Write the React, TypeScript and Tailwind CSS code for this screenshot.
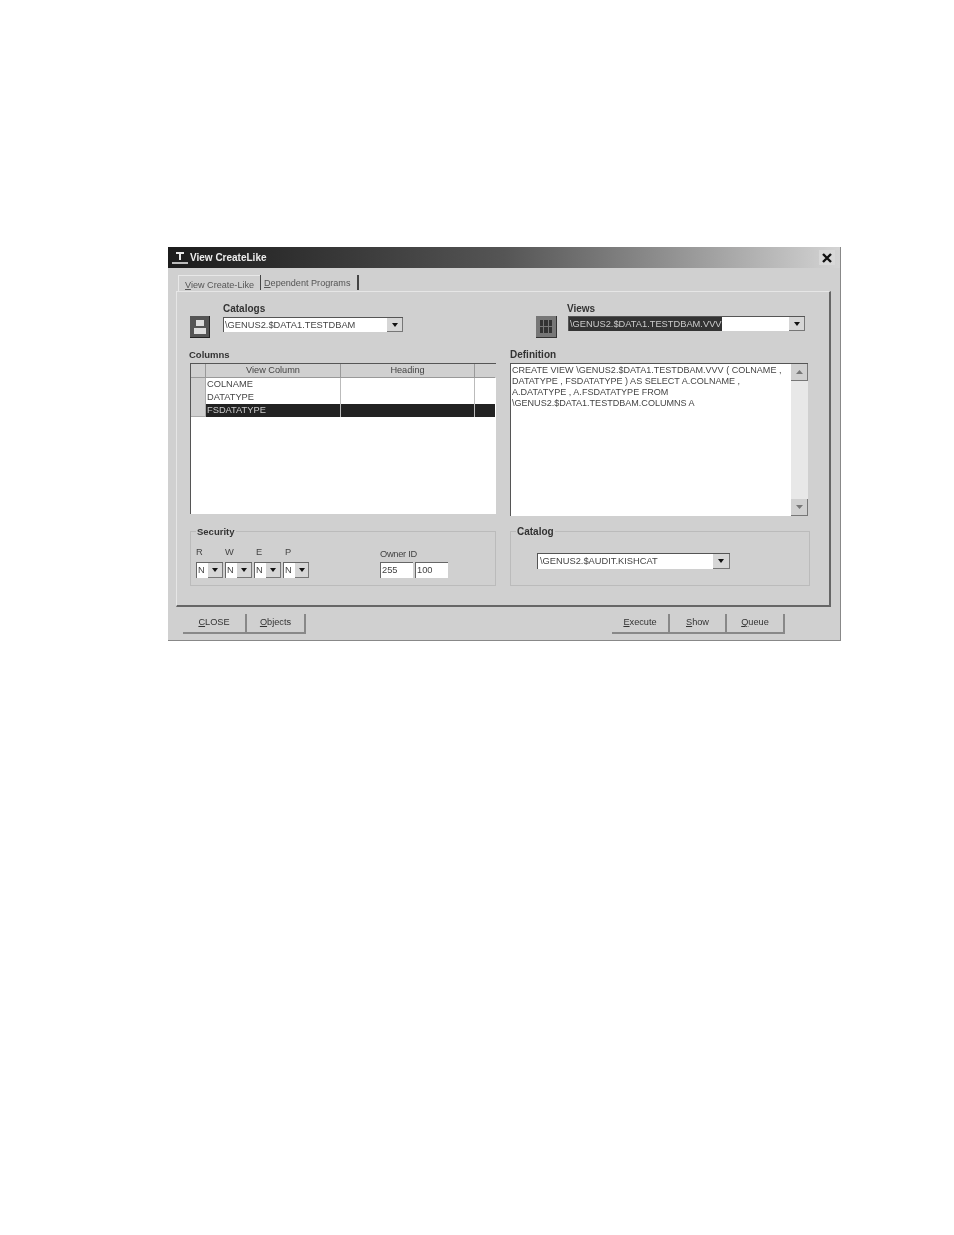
function Arrow() {
  return (
    <svg width="6" height="4" viewBox="0 0 6 4"><path d="M0 0h6L3 4z" fill="#111" /></svg>
  );
}
function DropBtn({ className }: { className: string }) {
  return (
    <div className={`flex items-center justify-center bg-[#d6d6d6] border-r border-b border-[#777] ${className}`}>
      <Arrow />
    </div>
  );
}
function MiniCombo({ w }: { w: string }) {
  return (
    <div className={`flex h-[16px] ${w} bg-white border-t border-l border-[#666]`}>
      <span className="w-[11px] pl-[1px] text-[9.3px] leading-[15px] text-[#444]">N</span>
      <DropBtn className="flex-1" />
    </div>
  );
}
function Btn({ label, u, w }: { label: string; u: string; w: string }) {
  const rest = label.slice(u.length);
  return (
    <div className={`h-[20px] ${w} flex items-center justify-center bg-[#d0d0d0] border-r-2 border-b-2 border-[#888] text-[9.2px] text-[#333]`}>
      <span><span className="underline">{u}</span>{rest}</span>
    </div>
  );
}
function Row({ text, dark }: { text: string; dark?: boolean }) {
  const cell = dark ? "bg-[#222] text-[#ccc]" : "bg-white text-[#444] border-b border-[#ccc]";
  return (
    <div className="grid grid-cols-[15px_135px_134px_20px] h-[13px] text-[9.3px] leading-[13px]">
      <div className="bg-[#d0d0d0] border-r border-b border-[#aaa]" />
      <div className={`${cell} pl-[1px] border-r border-r-[#bbb]`}>{text}</div>
      <div className={`${cell} border-r border-r-[#bbb]`} />
      <div className={cell} />
    </div>
  );
}
export default function App() {
  return (
    <div className="w-[954px] h-[1235px] bg-white pt-[247px] pl-[168px] font-['Liberation_Sans',Arial,sans-serif]">
      <div className="w-[673px] h-[394px] bg-[#d0d0d0] border-r border-b border-[#888] flex flex-col blur-[0.6px]">
        <div className="h-[21px] shrink-0 flex items-center bg-gradient-to-r from-[#1c1c1c] via-[#555] to-[#d4d4d4] pl-[3px] pr-[5px]">
          <svg width="18" height="17" viewBox="0 0 18 17" className="shrink-0">
            <path d="M5 3h8v2h-3v6H8V5H5z" fill="#e8e8e8" />
            <path d="M1 13h16v2H1z" fill="#bbb" />
          </svg>
          <span className="ml-[1px] text-[10px] font-bold text-[#eee]">View CreateLike</span>
          <div className="ml-auto w-[16px] h-[15px] bg-[#d8d8d8] flex items-center justify-center">
            <svg width="10" height="10" viewBox="0 0 10 10"><path d="M1 1l8 8M9 1L1 9" stroke="#111" strokeWidth="2.4" /></svg>
          </div>
        </div>
        <div className="h-[23px] shrink-0 flex items-end pl-[10px] text-[9.1px] text-[#555]">
          <div className="h-[16px] w-[82px] pl-[6px] leading-[18px] border-t border-l border-[#e8e8e8] whitespace-nowrap">
            <span className="underline">V</span>iew Create-Like
          </div>
          <div className="h-[15px] mb-[1px] w-[99px] pl-[3px] leading-[16px] border-l border-r-2 border-[#444] whitespace-nowrap">
            <span className="underline">D</span>ependent Programs
          </div>
        </div>
        <div className="ml-[8px] w-[655px] h-[316px] shrink-0 border-t border-l border-[#e6e6e6] border-r-2 border-b-2 border-r-[#666] border-b-[#666] pl-[12px] pt-[10px]">
          <div className="grid grid-cols-[321px_300px]">
            <div>
              <div className="pl-[34px] text-[10px] font-bold leading-[13px] text-[#333]">Catalogs</div>
              <div className="flex items-start mt-[2px]">
                <div className="ml-[1px] -mt-[1px] w-[20px] h-[22px] bg-[#555] border-r border-b border-[#222] flex flex-col items-center justify-center gap-[2px]">
                  <div className="w-[8px] h-[6px] bg-[#ddd]" />
                  <div className="w-[12px] h-[6px] bg-[#ddd]" />
                </div>
                <div className="ml-[13px] w-[180px] h-[15px] flex bg-white border-t border-l border-[#555]">
                  <span className="flex-1 pl-[1px] text-[9.3px] leading-[14px] text-[#444] whitespace-nowrap">\GENUS2.$DATA1.TESTDBAM</span>
                  <DropBtn className="w-[16px]" />
                </div>
              </div>
            </div>
            <div className="pl-[26px]">
              <div className="pl-[31px] text-[10px] font-bold leading-[13px] text-[#333]">Views</div>
              <div className="flex items-start mt-[1px]">
                <div className="w-[21px] h-[22px] bg-[#777] border-r border-b border-[#333] grid grid-cols-3 gap-[1px] p-[4px]">
                  <div className="bg-[#333]" /><div className="bg-[#333]" /><div className="bg-[#333]" />
                  <div className="bg-[#333]" /><div className="bg-[#333]" /><div className="bg-[#333]" />
                </div>
                <div className="ml-[11px] w-[237px] h-[15px] flex bg-white border-t border-l border-[#555]">
                  <div className="flex-1 min-w-0">
                    <div className="w-fit bg-[#333] text-[#ccc] text-[9.3px] leading-[14px] pl-[1px] whitespace-nowrap">\GENUS2.$DATA1.TESTDBAM.VVV</div>
                  </div>
                  <DropBtn className="w-[16px]" />
                </div>
              </div>
            </div>
            <div className="mt-[10px]">
              <div className="text-[9.5px] font-bold leading-[13px] text-[#333]">Columns</div>
              <div className="mt-[2px] ml-[1px] w-[306px] h-[151px] bg-white border-t border-l border-[#555]">
                <div className="grid grid-cols-[15px_135px_134px_20px] h-[14px] text-[9.2px] leading-[13px] text-[#444] bg-[#d0d0d0] text-center">
                  <div className="border-r border-b border-[#999]" />
                  <div className="border-r border-b border-[#999]">View Column</div>
                  <div className="border-r border-b border-[#999]">Heading</div>
                  <div className="border-b border-[#999]" />
                </div>
                <Row text="COLNAME" />
                <Row text="DATATYPE" />
                <Row text="FSDATATYPE" dark />
              </div>
            </div>
            <div className="mt-[10px]">
              <div className="text-[10px] font-bold leading-[13px] text-[#333]">Definition</div>
              <div className="mt-[2px] w-[298px] h-[153px] flex bg-white border-t border-l border-[#555]">
                <div className="flex-1 min-w-0 pl-[1px] pt-[1px] text-[9.05px] leading-[11px] text-[#444] whitespace-nowrap">
                  CREATE VIEW \GENUS2.$DATA1.TESTDBAM.VVV ( COLNAME ,<br />
                  DATATYPE , FSDATATYPE ) AS SELECT A.COLNAME ,<br />
                  A.DATATYPE , A.FSDATATYPE FROM<br />
                  \GENUS2.$DATA1.TESTDBAM.COLUMNS A
                </div>
                <div className="w-[17px] shrink-0 flex flex-col justify-between bg-[#e8e8e8]">
                  <div className="h-[17px] bg-[#d0d0d0] border-r border-b border-[#777] flex items-center justify-center">
                    <svg width="7" height="4" viewBox="0 0 7 4"><path d="M0 4h7L3.5 0z" fill="#777" /></svg>
                  </div>
                  <div className="h-[17px] bg-[#d0d0d0] border-r border-b border-[#777] flex items-center justify-center">
                    <svg width="7" height="4" viewBox="0 0 7 4"><path d="M0 0h7L3.5 4z" fill="#777" /></svg>
                  </div>
                </div>
              </div>
            </div>
            <div className="mt-[15px] ml-[1px] relative w-[306px] h-[55px] border border-[#bbb] pt-[14px] pl-[5px]">
              <span className="absolute -top-[6px] left-[5px] px-[1px] bg-[#d0d0d0] text-[9.5px] font-bold leading-[12px] text-[#333]">Security</span>
              <div className="flex">
                <div className="w-[184px]">
                  <div className="grid grid-cols-[29px_31px_29px_29px] text-[9.3px] leading-[12px] text-[#444]">
                    <span>R</span><span>W</span><span>E</span><span>P</span>
                  </div>
                  <div className="mt-[4px] flex gap-[2px]">
                    <MiniCombo w="w-[27px]" />
                    <MiniCombo w="w-[27px]" />
                    <MiniCombo w="w-[27px]" />
                    <MiniCombo w="w-[26px]" />
                  </div>
                </div>
                <div className="pt-[2px]">
                  <div className="text-[9.3px] leading-[12px] text-[#444] tracking-[-0.3px]">Owner ID</div>
                  <div className="mt-[2px] flex gap-[2px]">
                    <div className="w-[33px] h-[16px] bg-white border-t border-l border-[#666] text-[9.3px] leading-[15px] text-[#444] pl-[1px]">255</div>
                    <div className="w-[33px] h-[16px] bg-white border-t border-l border-[#666] text-[9.3px] leading-[15px] text-[#444] pl-[1px]">100</div>
                  </div>
                </div>
              </div>
            </div>
            <div className="mt-[15px] relative w-[300px] h-[55px] border border-[#bbb] pt-[21px] pl-[26px]">
              <span className="absolute -top-[6px] left-[5px] px-[1px] bg-[#d0d0d0] text-[10px] font-bold leading-[12px] text-[#333]">Catalog</span>
              <div className="w-[193px] h-[16px] flex bg-white border-t border-l border-[#555]">
                <span className="flex-1 pl-[2px] text-[9.3px] leading-[15px] text-[#444] whitespace-nowrap">\GENUS2.$AUDIT.KISHCAT</span>
                <DropBtn className="w-[17px]" />
              </div>
            </div>
          </div>
        </div>
        <div className="flex pl-[15px] pr-[55px] pt-[7px]">
          <Btn label="CLOSE" u="C" w="w-[64px]" />
          <Btn label="Objects" u="O" w="w-[59px]" />
          <div className="ml-auto flex">
            <Btn label="Execute" u="E" w="w-[58px]" />
            <Btn label="Show" u="S" w="w-[57px]" />
            <Btn label="Queue" u="Q" w="w-[58px]" />
          </div>
        </div>
      </div>
    </div>
  );
}
